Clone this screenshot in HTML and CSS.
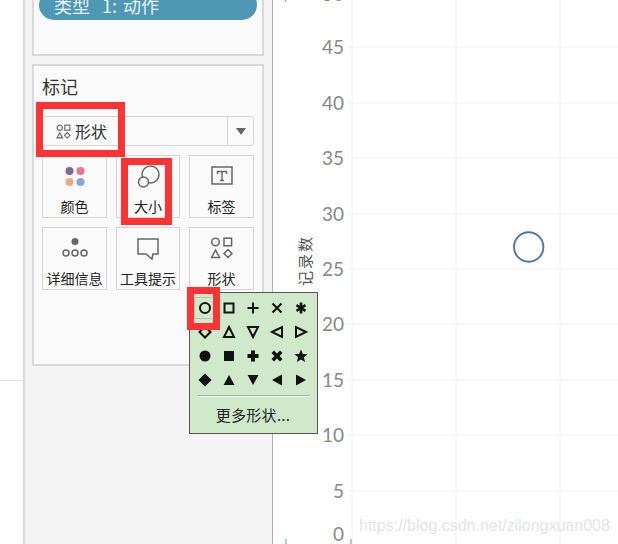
FILE: index.html

```html
<!DOCTYPE html>
<html lang="zh-CN">
<head>
    <meta charset="UTF-8">
    <title>标记 形状</title>
    <link rel="stylesheet" href="styles.css">
</head>
<body>
    <div class="gutter"><div class="gutter-line"></div></div>

    <aside class="sidebar">
        <section class="panel panel-top">
            <div class="pill">类型<span class="pill-num">1:</span>动作</div>
        </section>

        <section class="panel panel-marks">
            <h2 class="marks-title">标记</h2>

            <div class="select">
                <svg class="select-icon" viewBox="0 0 16 16">
                    <circle cx="4" cy="4" r="2.8"/>
                    <rect x="9.4" y="1.2" width="5.4" height="5.4"/>
                    <path d="M4 9.4l3 5.4h-6z"/>
                    <path d="M12 9.2l2.9 2.9-2.9 2.9-2.9-2.9z"/>
                </svg>
                <span class="select-text">形状</span>
                <span class="select-arrow"></span>
            </div>

            <div class="cards">
                <div class="card">
                    <svg class="card-icon" viewBox="0 0 28 28">
                        <circle cx="8.5" cy="8" r="4" fill="#7b6a94"/>
                        <circle cx="19.5" cy="8" r="4" fill="#f0748a"/>
                        <circle cx="8.5" cy="19" r="4" fill="#f2a77c"/>
                        <circle cx="19.5" cy="19" r="4" fill="#86a9d0"/>
                    </svg>
                    <span class="card-label">颜色</span>
                </div>
                <div class="card">
                    <svg class="card-icon line-icon" viewBox="0 0 28 28">
                        <circle cx="16.5" cy="11.5" r="8.5"/>
                        <circle cx="9.5" cy="19" r="5" fill="#fafafa"/>
                    </svg>
                    <span class="card-label">大小</span>
                </div>
                <div class="card">
                    <svg class="card-icon line-icon" viewBox="0 0 28 28">
                        <rect x="4" y="4" width="20" height="17"/>
                        <path class="t-mark" d="M9.5 11V8.5h9V11M14 8.5v9M12 17.5h4"/>
                    </svg>
                    <span class="card-label">标签</span>
                </div>
                <div class="card">
                    <svg class="card-icon line-icon" viewBox="0 0 28 28">
                        <circle cx="14" cy="6.5" r="3.5" fill="#666" stroke="none"/>
                        <circle cx="5" cy="18" r="3"/>
                        <circle cx="14" cy="18" r="3"/>
                        <circle cx="23" cy="18" r="3"/>
                    </svg>
                    <span class="card-label">详细信息</span>
                </div>
                <div class="card">
                    <svg class="card-icon line-icon" viewBox="0 0 28 28">
                        <path d="M4 4h20v15h-5l-1 5-6-5H4z"/>
                    </svg>
                    <span class="card-label">工具提示</span>
                </div>
                <div class="card">
                    <svg class="card-icon line-icon" viewBox="0 0 28 28">
                        <circle cx="7.5" cy="7" r="3.8"/>
                        <rect x="16" y="3.2" width="7.6" height="7.6"/>
                        <path d="M7.5 15l4 7.5h-8z"/>
                        <path d="M20 14.5l4 4-4 4-4-4z"/>
                    </svg>
                    <span class="card-label">形状</span>
                </div>
            </div>
        </section>
    </aside>

    <main class="chart">
        <svg class="chart-svg" viewBox="273 0 345 544">
            <g class="grid">
                <path d="M347 47H618M347 103H618M347 158H618M347 214H618M347 269H618M347 324H618M347 380H618M347 435H618M347 491H618"/>
                <path d="M352 0V544M456 0V544M560 0V544"/>
            </g>
            <g class="ticks">
                <text x="344" y="1">50</text>
                <text x="344" y="54">45</text>
                <text x="344" y="110">40</text>
                <text x="344" y="165">35</text>
                <text x="344" y="221">30</text>
                <text x="344" y="276">25</text>
                <text x="344" y="331">20</text>
                <text x="344" y="387">15</text>
                <text x="344" y="442">10</text>
                <text x="344" y="498">5</text>
                <text x="344" y="541">0</text>
            </g>
            <text class="axis-title" transform="translate(311 286) rotate(-90)">记录数</text>
            <circle class="point" cx="528.7" cy="247" r="14.7"/>
            <path class="edge-tick" d="M286 539V544M351 539V544M285.500 0V2"/>
        </svg>
        <span class="watermark">https://blog.csdn.net/zilongxuan008</span>
    </main>

    <!-- shape picker, sits on top of the sidebar and the chart -->
    <div class="picker">
        <div class="shape-grid">
            <svg class="shape selected" viewBox="0 0 24 24"><circle class="o" cx="12" cy="12" r="5"/></svg>
            <svg class="shape" viewBox="0 0 24 24"><rect class="o" x="7.5" y="7.5" width="9" height="9"/></svg>
            <svg class="shape" viewBox="0 0 24 24"><path class="o" d="M12 6.5v11M6.5 12h11"/></svg>
            <svg class="shape" viewBox="0 0 24 24"><path class="o" d="M7.500 7.500l9 9M16.500 7.500l-9 9"/></svg>
            <svg class="shape" viewBox="0 0 24 24"><path class="o thick" d="M12 6.5v11M7.500 9.200l9 5.600M16.500 9.200l-9 5.600"/></svg>

            <svg class="shape" viewBox="0 0 24 24"><path class="o" d="M12 6.5l5.5 5.5-5.5 5.5L6.500 12z"/></svg>
            <svg class="shape" viewBox="0 0 24 24"><path class="o" d="M12 7l5 10H7z"/></svg>
            <svg class="shape" viewBox="0 0 24 24"><path class="o" d="M12 17L7 7h10z"/></svg>
            <svg class="shape" viewBox="0 0 24 24"><path class="o" d="M7 12l10-5v10z"/></svg>
            <svg class="shape" viewBox="0 0 24 24"><path class="o" d="M17 12L7 7v10z"/></svg>

            <svg class="shape" viewBox="0 0 24 24"><circle cx="12" cy="12" r="5.500"/></svg>
            <svg class="shape" viewBox="0 0 24 24"><rect x="7" y="7" width="10" height="10"/></svg>
            <svg class="shape" viewBox="0 0 24 24"><path d="M10 6.500h4V10h3.500v4H14v3.500h-4V14H6.500v-4H10z"/></svg>
            <svg class="shape" viewBox="0 0 24 24"><path d="M9 6.500l3 3 3-3L17.500 9l-3 3 3 3-2.500 2.500-3-3-3 3L6.500 15l3-3-3-3z"/></svg>
            <svg class="shape" viewBox="0 0 24 24"><path d="M12 5.500l1.800 4.500 4.700.3-3.600 3 1.200 4.700-4.100-2.600L7.900 18l1.200-4.700-3.600-3 4.700-.3z"/></svg>

            <svg class="shape" viewBox="0 0 24 24"><path d="M12 5.500l6.500 6.500-6.500 6.500L5.500 12z"/></svg>
            <svg class="shape" viewBox="0 0 24 24"><path d="M12 7l5.500 10h-11z"/></svg>
            <svg class="shape" viewBox="0 0 24 24"><path d="M12 17L6.500 7h11z"/></svg>
            <svg class="shape" viewBox="0 0 24 24"><path d="M7 12l10-5.500v11z"/></svg>
            <svg class="shape" viewBox="0 0 24 24"><path d="M17 12L7 6.500v11z"/></svg>
        </div>
        <div class="picker-line"></div>
        <div class="picker-more">更多形状...</div>
    </div>

    <!-- red highlight boxes drawn over the screenshot -->
    <div class="mark-box box-select"></div>
    <div class="mark-box box-size"></div>
    <div class="mark-box box-circle"></div>
</body>
</html>
```

FILE: styles.css

```css
html, body {
    margin: 0;
    height: 100%;
}

body {
    display: flex;
    position: relative;
    width: 618px;
    height: 544px;
    overflow: hidden;
    background: #fff;
    color: #333;
    font-family: "Noto Sans CJK SC", "Liberation Sans", sans-serif;
}

/* left strip */
.gutter {
    width: 23px;
    flex: none;
    padding-top: 380px;
    box-sizing: border-box;
}
.gutter-line {
    height: 1px;
    background: #e8e8e8;
}

/* sidebar */
.sidebar {
    width: 250px;
    flex: none;
    box-sizing: border-box;
    padding: 0 8px 0 7px;
    background: #f3f3f3;
    border-left: 2px solid #d9d9d9;
    border-right: 1px solid #b0b0b0;
}

.panel {
    background: #fafafa;
    border: 2px solid #d9d9d9;
    box-sizing: border-box;
}

.panel-top {
    display: flow-root;
    height: 56px;
    border-top: none;
    padding: 0 5px;
    margin-bottom: 8px;
}

.pill {
    height: 30px;
    margin-top: -10px;
    padding-left: 15px;
    border-radius: 15px;
    background: #4e97b5;
    color: #e6f3f7;
    font-size: 18px;
    line-height: 30px;
    white-space: nowrap;
}
.pill-num {
    margin: 0 6px 0 12px;
}

.panel-marks {
    height: 302px;
    padding: 0 8px;
}

.marks-title {
    margin: 0;
    height: 50px;
    font-size: 18px;
    font-weight: normal;
    line-height: 40px;
}

.select {
    display: flex;
    align-items: center;
    height: 30px;
    box-sizing: border-box;
    border: 1px solid #d4d4d4;
    border-radius: 3px;
    padding-left: 13px;
}
.select-icon {
    width: 15px;
    height: 15px;
    fill: none;
    stroke: #666;
    stroke-width: 1.2;
}
.select-text {
    margin-left: 4px;
    font-size: 16px;
    flex: 1;
}
.select-arrow {
    width: 26px;
    height: 100%;
    box-sizing: border-box;
    border-left: 1px solid #d4d4d4;
    display: flex;
    align-items: center;
    justify-content: center;
}
.select-arrow::after {
    content: "";
    border-top: 7px solid #666;
    border-left: 5.500px solid transparent;
    border-right: 5.500px solid transparent;
}

.cards {
    display: grid;
    grid-template-columns: 65px 64px 65px;
    column-gap: 9px;
    row-gap: 9px;
    margin-top: 9px;
}

.card {
    display: flex;
    flex-direction: column;
    align-items: center;
    height: 63px;
    box-sizing: border-box;
    border: 1px solid #d4d4d4;
    padding-top: 7px;
}
.card-icon {
    width: 28px;
    height: 28px;
    flex: none;
}
.line-icon {
    fill: none;
    stroke: #666;
    stroke-width: 1.5;
}
.t-mark {
    stroke-width: 1.4;
}
.card-label {
    margin-top: 5px;
    font-size: 14px;
    line-height: 20px;
    white-space: nowrap;
    color: #222;
}

/* chart */
.chart {
    position: relative;
    flex: 1;
    min-width: 0;
}
.chart-svg {
    display: block;
    width: 345px;
    height: 544px;
}
.grid path {
    fill: none;
    stroke: #f2f2f2;
    stroke-width: 1;
}
.ticks text {
    font-family: Lato, "Open Sans", sans-serif;
    font-size: 19px;
    fill: #888;
    text-anchor: end;
}
.axis-title {
    font-size: 15px;
    letter-spacing: 2px;
    fill: #555;
}
.point {
    fill: none;
    stroke: #4e79a7;
    stroke-width: 2;
}
.edge-tick {
    stroke: #8cc4ae;
    stroke-width: 1.500;
}
.watermark {
    position: absolute;
    left: 86px;
    top: 516px;
    font-family: "Liberation Sans", sans-serif;
    font-size: 16px;
    line-height: 20px;
    color: #e4e4e4;
    white-space: nowrap;
}

/* shape picker */
.picker {
    position: absolute;
    left: 189px;
    top: 292px;
    width: 129px;
    height: 142px;
    box-sizing: border-box;
    border: 1px solid #555;
    background: #d0e9ca;
    padding: 3px 4px 0 3px;
}
.shape-grid {
    display: grid;
    grid-template-columns: repeat(5, 24px);
    grid-auto-rows: 24px;
}
.shape {
    display: block;
    width: 24px;
    height: 24px;
    fill: #111;
}
.shape .o {
    fill: none;
    stroke: #111;
    stroke-width: 2;
}
.shape .thick {
    stroke-width: 2.600;
}
.shape.selected {
    outline: 1px solid #b4c8b0;
    outline-offset: -2px;
}
.picker-line {
    height: 1px;
    margin: 3px 3px 0 4px;
    background: #f2f7f0;
    border-top: 1px solid #a9b8a6;
}
.picker-more {
    text-align: center;
    font-size: 15px;
    letter-spacing: 0.3px;
    line-height: 20px;
    margin-top: 8px;
    color: #222;
}

/* red boxes */
.mark-box {
    position: absolute;
    box-sizing: border-box;
    border: 7px solid #ff3333;
}
.box-select {
    left: 36px;
    top: 102px;
    width: 89px;
    height: 55px;
}
.box-size {
    left: 121px;
    top: 158px;
    width: 51px;
    height: 67px;
}
.box-circle {
    left: 187px;
    top: 287px;
    width: 33px;
    height: 43px;
}
```
